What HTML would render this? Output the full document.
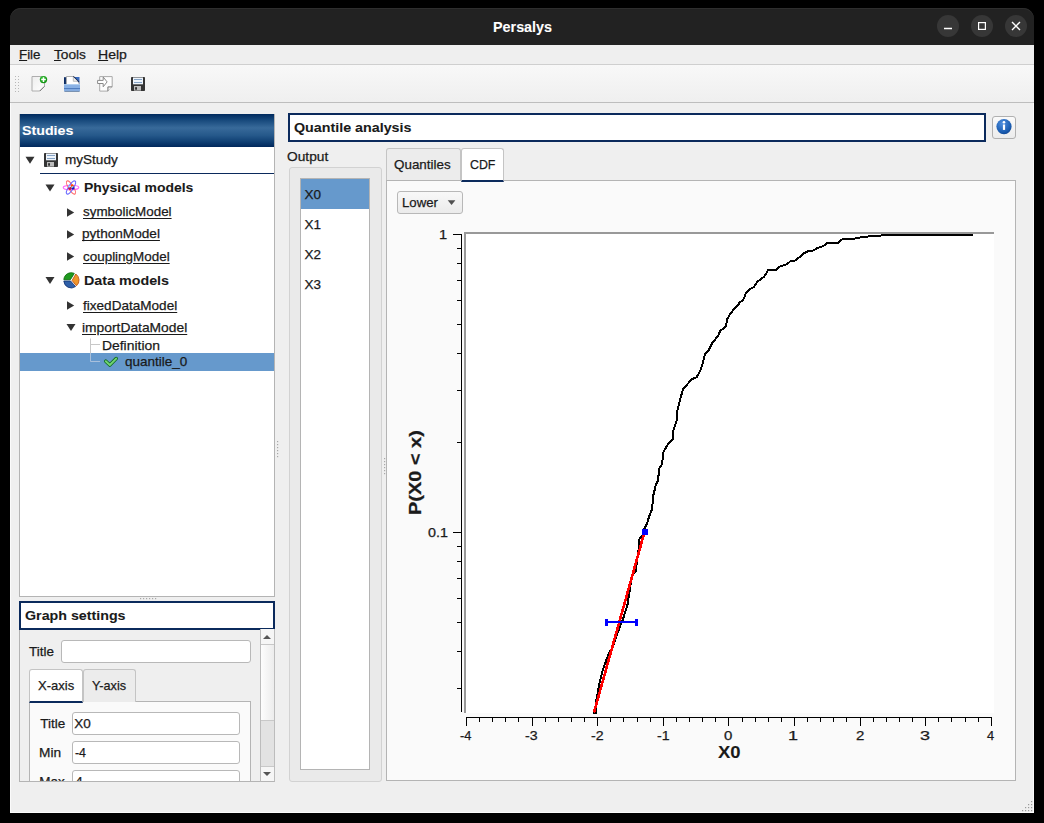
<!DOCTYPE html>
<html><head><meta charset="utf-8">
<style>
*{box-sizing:border-box}
html,body{margin:0;padding:0}
body{width:1044px;height:823px;overflow:hidden;background:#000;position:relative;font-family:"Liberation Sans",sans-serif;font-size:13px;color:#1a1a1a}
.a{position:absolute}
.t{position:absolute;white-space:nowrap;line-height:1;-webkit-text-stroke:0.25px currentColor}
svg.a{overflow:visible}
</style></head><body>
<div class="a" style="left:10px;top:40px;width:1024px;height:773px;background:#efefef"></div>
<div class="a" style="left:10px;top:45px;width:1024px;height:768px;border:1px solid #fbfbfb;border-top:0"></div>
<div class="a" style="left:10px;top:8px;width:1024px;height:37px;background:#222;border-radius:11px 11px 0 0;box-shadow:inset 0 1px 0 #2e2e2e"></div>
<div class="t" id="t0" style="left:492.58px;top:20.25px;font-size:14px;font-weight:bold;-webkit-text-stroke:0.08px currentColor;color:#fff;transform:scaleX(1.0250);transform-origin:0 0">Persalys</div>
<div class="a" style="left:937px;top:15px;width:22px;height:22px;border-radius:50%;background:#373737"></div>
<div class="a" style="left:971px;top:15px;width:22px;height:22px;border-radius:50%;background:#373737"></div>
<div class="a" style="left:1005px;top:15px;width:22px;height:22px;border-radius:50%;background:#373737"></div>
<svg class="a" style="left:0;top:0" width="1044" height="823">
<path d="M944 28.5H952" stroke="#fff" stroke-width="1.5"/>
<rect x="978.6" y="22.6" width="6.8" height="6.8" stroke="#fff" stroke-width="1.2" fill="none"/>
<path d="M1012 22L1020 30M1020 22L1012 30" stroke="#fff" stroke-width="1.4"/>
</svg>
<div class="a" style="left:10px;top:45px;width:1024px;height:20px;background:#efefef;border-bottom:1px solid #cfcfcf"></div>
<div class="t" id="t1" style="left:18.98px;top:48.40px;font-size:13px;transform:scaleX(1.0250);transform-origin:0 0"><u>F</u>ile</div>
<div class="t" id="t2" style="left:53.80px;top:48.40px;font-size:13px;transform:scaleX(1.0533);transform-origin:0 0"><u>T</u>ools</div>
<div class="t" id="t3" style="left:97.92px;top:48.40px;font-size:13px;transform:scaleX(1.0800);transform-origin:0 0"><u>H</u>elp</div>
<div class="a" style="left:10px;top:65px;width:1024px;height:38px;background:linear-gradient(#f8f8f8,#efefef);border-bottom:1px solid #bdbdbd"></div>
<div class="a" style="left:19px;top:114px;width:256px;height:483px;background:#fff;border:1px solid #b4b4b4;border-top:0"></div>
<div class="a" style="left:20px;top:114px;width:254px;height:33px;background:linear-gradient(#002a5e 0%,#16487b 18%,#386a9a 42%,#25588a 65%,#0e3e72 85%,#00275b 100%)"></div>
<div class="t" id="t4" style="left:22.45px;top:123.67px;font-size:13.5px;font-weight:bold;-webkit-text-stroke:0.08px currentColor;color:#fff;transform:scaleX(1.0532);transform-origin:0 0">Studies</div>
<svg class="a" style="left:0;top:0" width="1044" height="823">
<path d="M25.5 156.8H34.5L30 163.8Z" fill="#333"/>
<path d="M45.5 184.5H54.5L50 191.5Z" fill="#333"/>
<path d="M45.5 277H54.5L50 284Z" fill="#333"/>
<path d="M67 208.3V216.7L74.2 212.5Z" fill="#333"/>
<path d="M67 230.3V238.7L74.2 234.5Z" fill="#333"/>
<path d="M67 252.3V260.7L74.2 256.5Z" fill="#333"/>
<path d="M67 301.3V309.7L74.2 305.5Z" fill="#333"/>
<path d="M66.5 324H75.5L71 331Z" fill="#333"/>
<path d="M40 173.5H274" stroke="#0b2a5c" stroke-width="1"/>
<path d="M90.5 338.5V353M90.5 344.5H100" stroke="#c8c8c8" stroke-width="1" fill="none"/>
</svg>
<div class="a" style="left:20px;top:353px;width:254px;height:18px;background:#6699cc"></div>
<svg class="a" style="left:0;top:0" width="1044" height="823">
<path d="M90.5 353V361.5H100" stroke="#a8c0dc" stroke-width="1" fill="none"/>
</svg>
<div class="t" id="t5" style="left:64.60px;top:153.47px;font-size:13.5px;transform:scaleX(1.0038);transform-origin:0 0">myStudy</div>
<div class="t" id="t6" style="left:84.47px;top:181.17px;font-size:13.5px;font-weight:bold;-webkit-text-stroke:0.08px currentColor;transform:scaleX(1.0337);transform-origin:0 0">Physical models</div>
<div class="t" id="t7" style="left:83.40px;top:205.37px;font-size:13.5px;text-decoration:underline;text-underline-offset:2px;transform:scaleX(0.9921);transform-origin:0 0">symbolicModel</div>
<div class="t" id="t8" style="left:82.39px;top:227.37px;font-size:13.5px;text-decoration:underline;text-underline-offset:2px;transform:scaleX(1.0079);transform-origin:0 0">pythonModel</div>
<div class="t" id="t9" style="left:83.40px;top:249.67px;font-size:13.5px;text-decoration:underline;text-underline-offset:2px;transform:scaleX(0.9953);transform-origin:0 0">couplingModel</div>
<div class="t" id="t10" style="left:84.24px;top:273.97px;font-size:13.5px;font-weight:bold;-webkit-text-stroke:0.08px currentColor;transform:scaleX(1.0595);transform-origin:0 0">Data models</div>
<div class="t" id="t11" style="left:83.00px;top:299.27px;font-size:13.5px;text-decoration:underline;text-underline-offset:2px;transform:scaleX(1.0043);transform-origin:0 0">fixedDataModel</div>
<div class="t" id="t12" style="left:81.98px;top:321.17px;font-size:13.5px;text-decoration:underline;text-underline-offset:2px;transform:scaleX(1.0238);transform-origin:0 0">importDataModel</div>
<div class="t" id="t13" style="left:102.37px;top:338.67px;font-size:13.5px;transform:scaleX(1.0291);transform-origin:0 0">Definition</div>
<div class="t" id="t14" style="left:125.00px;top:354.97px;font-size:13.5px;transform:scaleX(1.0000);transform-origin:0 0">quantile_0</div>
<div class="a" style="left:19px;top:601px;width:256px;height:29px;background:#fff;border:2px solid #0b2a5c"></div>
<div class="t" id="t15" style="left:25.44px;top:608.97px;font-size:13.5px;font-weight:bold;-webkit-text-stroke:0.08px currentColor;transform:scaleX(1.0553);transform-origin:0 0">Graph settings</div>
<div class="a" style="left:19px;top:630px;width:256px;height:152px;border:1px solid #b4b4b4;border-top:0"></div>
<div class="a" style="left:20px;top:630px;width:240px;height:151px;overflow:hidden">
<div class="t" id="t16" style="left:9.30px;top:14.77px;font-size:13.5px;transform:scaleX(0.9960);transform-origin:0 0">Title</div>
<div class="a" style="left:41px;top:10px;width:190px;height:23px;border:1px solid #b8b8b8;border-radius:3px;background:#fff"></div>
<div class="a" style="left:9px;top:71px;width:222px;height:90px;border:1px solid #b4b4b4;background:#fafafa"></div>
<div class="a" style="left:63px;top:39px;width:53px;height:33px;border:1px solid #c4c4c4;border-bottom:0;border-radius:3px 3px 0 0;background:#ececec"></div>
<div class="a" style="left:9px;top:39px;width:54px;height:34px;border:1px solid #c4c4c4;border-bottom:2px solid #0b2a5c;border-radius:3px 3px 0 0;background:#fff"></div>
<div class="t" id="t17" style="left:17.54px;top:48.97px;font-size:13.5px;transform:scaleX(0.9639);transform-origin:0 0">X-axis</div>
<div class="t" id="t18" style="left:72.20px;top:49.47px;font-size:13.5px;transform:scaleX(0.9389);transform-origin:0 0">Y-axis</div>
<div class="t" id="t19" style="left:20.30px;top:86.77px;font-size:13.5px;transform:scaleX(1.0000);transform-origin:0 0">Title</div>
<div class="a" style="left:52px;top:82px;width:168px;height:23px;border:1px solid #b8b8b8;border-radius:3px;background:#fff"></div>
<div class="t" id="t20" style="left:54.30px;top:86.77px;font-size:13.5px;transform:scaleX(1.0000);transform-origin:0 0">X0</div>
<div class="t" id="t21" style="left:19.28px;top:115.77px;font-size:13.5px;transform:scaleX(1.0150);transform-origin:0 0">Min</div>
<div class="a" style="left:52px;top:111px;width:168px;height:23px;border:1px solid #b8b8b8;border-radius:3px;background:#fff"></div>
<div class="t" id="t22" style="left:55.30px;top:115.77px;font-size:13.5px;transform:scaleX(0.9167);transform-origin:0 0">-4</div>
<div class="t" id="t23" style="left:19.30px;top:144.77px;font-size:13.5px;transform:scaleX(1.0000);transform-origin:0 0">Max</div>
<div class="a" style="left:52px;top:140px;width:168px;height:23px;border:1px solid #b8b8b8;border-radius:3px;background:#fff"></div>
<div class="t" id="t24" style="left:55.30px;top:144.77px;font-size:13.5px;transform:scaleX(1.0000);transform-origin:0 0">4</div>
</div>
<div class="a" style="left:260px;top:629px;width:15px;height:153px;border-left:1px solid #bcbcbc;border-right:1px solid #bcbcbc;border-bottom:1px solid #b4b4b4;background:linear-gradient(90deg,#fdfdfd,#ececec)"></div>
<div class="a" style="left:261px;top:644px;width:13px;height:1px;background:#c8c8c8"></div>
<div class="a" style="left:261px;top:629px;width:13px;height:15px;background:#f6f6f6"></div>
<div class="a" style="left:261px;top:720px;width:13px;height:47px;background:#e2e2e2;border-top:1px solid #c8c8c8;border-bottom:1px solid #c8c8c8"></div>
<div class="a" style="left:261px;top:767px;width:13px;height:14px;background:#f6f6f6"></div>
<svg class="a" style="left:0;top:0" width="1044" height="823"><path d="M263 639H271L267 635Z" fill="#555"/><path d="M263 772H271L267 776Z" fill="#555"/></svg>
<div class="a" style="left:288px;top:113px;width:698px;height:29px;background:#fff;border:2px solid #0b2a5c"></div>
<div class="t" id="t25" style="left:294.34px;top:121.07px;font-size:13.5px;font-weight:bold;-webkit-text-stroke:0.08px currentColor;transform:scaleX(1.0578);transform-origin:0 0">Quantile analysis</div>
<div class="a" style="left:992px;top:116px;width:24px;height:23px;border:1px solid #b0b0b0;border-radius:3px;background:linear-gradient(#fafafa,#ececec)"></div>
<div class="t" id="t26" style="left:287.28px;top:149.97px;font-size:13.5px;transform:scaleX(1.0175);transform-origin:0 0">Output</div>
<div class="a" style="left:289px;top:167px;width:93px;height:615px;border:1px solid #d2d2d2;border-radius:3px;background:#eaeaea"></div>
<div class="a" style="left:300px;top:178px;width:70px;height:592px;border:1px solid #b4b4b4;background:#fff"></div>
<div class="a" style="left:301px;top:179px;width:68px;height:30px;background:#6699cc"></div>
<div class="t" id="t27" style="left:304.50px;top:188.17px;font-size:13.5px">X0</div>
<div class="t" id="t28" style="left:304.50px;top:217.97px;font-size:13.5px">X1</div>
<div class="t" id="t29" style="left:304.50px;top:247.77px;font-size:13.5px">X2</div>
<div class="t" id="t30" style="left:304.50px;top:277.57px;font-size:13.5px">X3</div>
<div class="a" style="left:386px;top:180px;width:630px;height:601px;border:1px solid #b4b4b4;background:#fafafa"></div>
<div class="a" style="left:386px;top:148px;width:75px;height:32px;border:1px solid #c4c4c4;border-bottom:0;border-radius:3px 3px 0 0;background:#ececec"></div>
<div class="t" id="t31" style="left:394.41px;top:158.47px;font-size:13.5px;transform:scaleX(0.9929);transform-origin:0 0">Quantiles</div>
<div class="a" style="left:461px;top:148px;width:43px;height:34px;border:1px solid #c4c4c4;border-bottom:2px solid #0b2a5c;border-radius:3px 3px 0 0;background:#fff"></div>
<div class="t" id="t32" style="left:469.58px;top:157.77px;font-size:13.5px;transform:scaleX(0.9154);transform-origin:0 0">CDF</div>
<div class="a" style="left:397px;top:191px;width:66px;height:23px;border:1px solid #b8b8b8;border-radius:3px;background:linear-gradient(#f8f8f8,#ebebeb)"></div>
<div class="t" id="t33" style="left:401.52px;top:195.77px;font-size:13.5px;transform:scaleX(0.9778);transform-origin:0 0">Lower</div>
<svg class="a" style="left:0;top:0" width="1044" height="823">
<rect x="15" y="76" width="1" height="1" fill="#b8b8b8"/><rect x="15" y="79" width="1" height="1" fill="#b8b8b8"/><rect x="15" y="82" width="1" height="1" fill="#b8b8b8"/><rect x="15" y="85" width="1" height="1" fill="#b8b8b8"/><rect x="15" y="88" width="1" height="1" fill="#b8b8b8"/><rect x="15" y="91" width="1" height="1" fill="#b8b8b8"/><rect x="18" y="76" width="1" height="1" fill="#b8b8b8"/><rect x="18" y="79" width="1" height="1" fill="#b8b8b8"/><rect x="18" y="82" width="1" height="1" fill="#b8b8b8"/><rect x="18" y="85" width="1" height="1" fill="#b8b8b8"/><rect x="18" y="88" width="1" height="1" fill="#b8b8b8"/><rect x="18" y="91" width="1" height="1" fill="#b8b8b8"/>
<defs>
<linearGradient id="pg" x1="0" y1="0" x2="1" y2="1"><stop offset="0" stop-color="#ededed"/><stop offset="1" stop-color="#ffffff"/></linearGradient>
<radialGradient id="gr" cx="0.4" cy="0.35" r="0.7"><stop offset="0" stop-color="#3cc83c"/><stop offset="1" stop-color="#0a8a0a"/></radialGradient>
<radialGradient id="ib" cx="0.4" cy="0.3" r="0.8"><stop offset="0" stop-color="#4f8fdf"/><stop offset="0.7" stop-color="#1a5cb0"/><stop offset="1" stop-color="#0c3f8a"/></radialGradient>
</defs>
<path d="M32 76.5H44.5V86.3L39.8 91H32Z" fill="url(#pg)" stroke="#adadad" stroke-width="1"/>
<path d="M44.5 86.3L39.8 91" stroke="#777" stroke-width="1"/>
<circle cx="43.5" cy="79.6" r="3.7" fill="url(#gr)"/>
<path d="M41.2 79.6H45.8M43.5 77.3V81.9" stroke="#fff" stroke-width="1.5"/>

<path d="M64 77.2H69.5V85H64Z" fill="#0c2c64"/>
<path d="M72.5 77H79.5V85H72.5Z" fill="#3a6cc0"/>
<path d="M66.4 85V76.5H73.3L79 82.2V85Z" fill="#fff" stroke="#a6a6a6" stroke-width="0.9"/>
<path d="M73.3 76.5L79 82.2" stroke="#1a2d55" stroke-width="1.1"/>
<path d="M73.3 77V81.3H77.6" fill="#ececec" stroke="#b0b0b0" stroke-width="0.8"/>
<path d="M64 84.3H80V90.7Q80 91.8 78.8 91.8H65.2Q64 91.8 64 90.7Z" fill="#88b0e4"/>
<path d="M64 84.6H80" stroke="#b8d4f4" stroke-width="0.8"/>
<path d="M64 88.6H80" stroke="#4a78bb" stroke-width="1"/>
<path d="M64.5 91.4H79.5" stroke="#6a7f9a" stroke-width="0.8"/>

<path d="M99.7 76.6H112.2V86.4L107.9 91.1H99.7Z" fill="#fdfdfd" stroke="#a9a9a9" stroke-width="1"/>
<path d="M107.9 91.1V86.9H112.2" fill="#f2f2f2" stroke="#777" stroke-width="1"/>
<path d="M97.6 80.4H103.2V77L107.1 81.9L103.2 86.8V83.5H97.6Z" fill="#fff" stroke="#8a8a8a" stroke-width="1" stroke-linejoin="round"/>

<g transform="translate(0 0)">
<rect x="131" y="77" width="14" height="14" rx="0.8" fill="#343434"/>
<rect x="133" y="77.5" width="10" height="6.8" fill="#eef4fb"/>
<path d="M134 79.5H142M134 82.5H142" stroke="#86a4c6" stroke-width="1"/>
<rect x="134" y="86" width="7" height="4.6" fill="#bdbdbd"/>
<rect x="135.2" y="87.2" width="1.7" height="2.5" fill="#222"/>
</g>
<g transform="translate(-87 76)">
<rect x="131" y="77" width="14" height="14" rx="0.8" fill="#343434"/>
<rect x="133" y="77.5" width="10" height="6.8" fill="#eef4fb"/>
<path d="M134 79.5H142M134 82.5H142" stroke="#86a4c6" stroke-width="1"/>
<rect x="134" y="86" width="7" height="4.6" fill="#bdbdbd"/>
<rect x="135.2" y="87.2" width="1.7" height="2.5" fill="#222"/>
</g>
<g transform="translate(71 187.5)" fill="none" stroke-width="1.1">
<ellipse rx="7.8" ry="2.3" stroke="#ff66ff"/>
<ellipse rx="7.6" ry="2.4" transform="rotate(58)" stroke="#ff6a6a"/>
<ellipse rx="7.6" ry="2.4" transform="rotate(-58)" stroke="#6a6aff"/>
<circle cx="-1" cy="0.8" r="1.6" fill="#c0104a" stroke="none"/>
<circle cx="1.2" cy="-1.8" r="1.5" fill="#ff4a00" stroke="none"/>
<circle cx="2" cy="0.6" r="1.5" fill="#1010c0" stroke="none"/>
<circle cx="-1.6" cy="-1" r="0.9" fill="#a0f0ff" stroke="none"/>
<circle cx="1.5" cy="-0.6" r="0.9" fill="#80e0f0" stroke="none"/>
</g>
<g transform="translate(71.2 280.3)">
<path d="M-7.4 -0.6A7.4 7.4 0 0 1 3.1 -6.9L-0.8 -0.6Z" fill="#1f9a1f" stroke="#0b6a0b" stroke-width="0.8"/>
<path d="M0.9 0.2L4.6 -6.3A7.4 7.4 0 0 1 5.2 5.5Z" fill="#f0962a" stroke="#b8480a" stroke-width="0.8"/>
<path d="M-7.4 0.7H-0.6L4.3 6.3A7.4 7.4 0 0 1 -7.4 0.7Z" fill="#2f5fa8" stroke="#0e2f70" stroke-width="0.8"/>
</g>
<path d="M105.8 361.2L109.8 365L116.2 358.6" fill="none" stroke="#0e6a1e" stroke-width="3.6" stroke-linejoin="round" stroke-linecap="round"/>
<path d="M105.8 361.2L109.8 365L116.2 358.6" fill="none" stroke="#72d472" stroke-width="2"  stroke-linejoin="round" stroke-linecap="round"/>
<circle cx="1004" cy="126.6" r="7.6" fill="url(#ib)"/>
<circle cx="1004" cy="122.2" r="1.3" fill="#fff"/>
<rect x="1002.9" y="124.5" width="2.2" height="5.4" fill="#fff"/>
<path d="M447.7 200.3H455.4L451.55 205Z" fill="#505050"/>
<rect x="277" y="441" width="1.2" height="1.2" fill="#a8a8a8"/><rect x="277" y="444" width="1.2" height="1.2" fill="#a8a8a8"/><rect x="277" y="447" width="1.2" height="1.2" fill="#a8a8a8"/><rect x="277" y="450" width="1.2" height="1.2" fill="#a8a8a8"/><rect x="277" y="453" width="1.2" height="1.2" fill="#a8a8a8"/><rect x="277" y="456" width="1.2" height="1.2" fill="#a8a8a8"/>
<rect x="384" y="458" width="1.2" height="1.2" fill="#a8a8a8"/><rect x="384" y="461" width="1.2" height="1.2" fill="#a8a8a8"/><rect x="384" y="464" width="1.2" height="1.2" fill="#a8a8a8"/><rect x="384" y="467" width="1.2" height="1.2" fill="#a8a8a8"/><rect x="384" y="470" width="1.2" height="1.2" fill="#a8a8a8"/><rect x="384" y="473" width="1.2" height="1.2" fill="#a8a8a8"/>
<rect x="140" y="598" width="1.2" height="1.2" fill="#a8a8a8"/><rect x="143" y="598" width="1.2" height="1.2" fill="#a8a8a8"/><rect x="146" y="598" width="1.2" height="1.2" fill="#a8a8a8"/><rect x="149" y="598" width="1.2" height="1.2" fill="#a8a8a8"/><rect x="152" y="598" width="1.2" height="1.2" fill="#a8a8a8"/><rect x="155" y="598" width="1.2" height="1.2" fill="#a8a8a8"/>
</svg>
<svg class="a" style="left:0;top:0" width="1044" height="823"><rect x="1031" y="801" width="1.2" height="1.2" fill="#9a9a9a"/><rect x="1031" y="804" width="1.2" height="1.2" fill="#9a9a9a"/><rect x="1028" y="804" width="1.2" height="1.2" fill="#9a9a9a"/><rect x="1031" y="807" width="1.2" height="1.2" fill="#9a9a9a"/><rect x="1028" y="807" width="1.2" height="1.2" fill="#9a9a9a"/><rect x="1025" y="807" width="1.2" height="1.2" fill="#9a9a9a"/><rect x="1031" y="810" width="1.2" height="1.2" fill="#9a9a9a"/><rect x="1028" y="810" width="1.2" height="1.2" fill="#9a9a9a"/><rect x="1025" y="810" width="1.2" height="1.2" fill="#9a9a9a"/><rect x="1022" y="810" width="1.2" height="1.2" fill="#9a9a9a"/></svg>
<div class="a" style="left:464px;top:232px;width:530px;height:481px;background:#fff;border-top:2px solid #999;border-left:2px solid #999"></div>
<svg class="a" style="left:0;top:0" width="1044" height="823">
<path d="M461.5 234V712" stroke="#000" stroke-width="1"/>
<path d="M453 234.5H462M453 532.5H462M457 442.5H462M457 390.5H462M457 353.5H462M457 324.5H462M457 300.5H462M457 280.5H462M457 263.5H462M457 248.5H462M457 688.5H462M457 651.5H462M457 622.5H462M457 598.5H462M457 578.5H462M457 561.5H462M457 546.5H462" stroke="#000" stroke-width="1"/>
<path d="M466 717.5H992" stroke="#000" stroke-width="1"/>
<path d="M466.5 717V726M479.5 717V722M492.5 717V722M505.5 717V722M518.5 717V722M532.5 717V726M545.5 717V722M558.5 717V722M571.5 717V722M584.5 717V722M597.5 717V726M610.5 717V722M623.5 717V722M637.5 717V722M650.5 717V722M663.5 717V726M676.5 717V722M689.5 717V722M702.5 717V722M715.5 717V722M728.5 717V726M742.5 717V722M755.5 717V722M768.5 717V722M781.5 717V722M794.5 717V726M807.5 717V722M820.5 717V722M833.5 717V722M846.5 717V722M860.5 717V726M873.5 717V722M886.5 717V722M899.5 717V722M912.5 717V722M925.5 717V726M938.5 717V722M951.5 717V722M965.5 717V722M978.5 717V722M991.5 717V726" stroke="#000" stroke-width="1"/>
<path d="M593 712.5 L596 712.5 L596 702 L598 691 L600 681 L602.5 671 L606 661 L609.5 652 L612.6 648 L615 640 L618 632 L621.4 622 L622.8 620 L627.7 603.8 L629.5 591.7 L631.9 575.9 L636.2 571 L636.8 560.1 L638.6 549.2 L639.2 539.4 L642.2 535.8 L644.1 529.1 L647.1 523.6 L649.2 516.2 L652.1 508.9 L653.2 495.8 L655.7 485.6 L658.2 479.8 L659 468.8 L662.3 463.7 L663 452.8 L668.1 444 L673.2 439 L673.2 431 L676.9 420 L677 412.2 L679.9 400.6 L682.8 389.7 L687.2 384.5 L691.5 379.4 L696.6 377.3 L701 369.2 L703.2 361.2 L705.1 353.9 L709 349.6 L712.7 342.3 L717.8 336.4 L720 331.3 L725.8 326.2 L727.3 319 L729.4 315.3 L732.8 310.5 L738.2 305 L739.4 302.6 L743.1 300.2 L746.1 292.9 L749.8 289.3 L754 286.8 L757.7 281.4 L764.3 276.5 L768 270.4 L775.9 269.8 L779.5 266.8 L786.8 264.3 L791.1 260.7 L794.7 260.7 L800.2 256.5 L803.8 253.4 L808.7 251 L813.6 250.4 L817.2 248 L823.3 246.1 L826.9 243.1 L831.8 242.5 L838.5 242.5 L843 238.7 L853.6 238.7 L864.2 236.8 L878 235.8 L886.2 235 L905.7 235 L973.3 235" stroke="#000" stroke-width="2" fill="none" shape-rendering="crispEdges"/>
<path d="M594 712.5L644.5 532" stroke="#f00" stroke-width="2.6" fill="none" shape-rendering="crispEdges"/>
<rect x="642" y="529" width="6" height="6" fill="#00f"/>
<path d="M605 622H638" stroke="#00f" stroke-width="2"/>
<rect x="605" y="619" width="3" height="7" fill="#00f"/>
<rect x="635" y="619" width="3" height="7" fill="#00f"/>
</svg>
<div class="t" id="t34" style="left:439.48px;top:229.04px;font-size:12px;transform:scaleX(1.2200);transform-origin:0 0">1</div>
<div class="t" id="t35" style="left:427.70px;top:526.94px;font-size:12px;transform:scaleX(1.1938);transform-origin:0 0">0.1</div>
<div class="t" id="t36" style="left:459.80px;top:730.24px;font-size:12px;transform:scaleX(1.0727);transform-origin:0 0">-4</div>
<div class="t" id="t37" style="left:525.40px;top:730.24px;font-size:12px;transform:scaleX(1.1800);transform-origin:0 0">-3</div>
<div class="t" id="t38" style="left:591.00px;top:730.24px;font-size:12px;transform:scaleX(1.1800);transform-origin:0 0">-2</div>
<div class="t" id="t39" style="left:656.60px;top:730.24px;font-size:12px;transform:scaleX(1.1800);transform-origin:0 0">-1</div>
<div class="t" id="t40" style="left:724.35px;top:730.24px;font-size:12px;transform:scaleX(1.2500);transform-origin:0 0">0</div>
<div class="t" id="t41" style="left:788.45px;top:730.24px;font-size:12px;transform:scaleX(1.5000);transform-origin:0 0">1</div>
<div class="t" id="t42" style="left:855.55px;top:730.24px;font-size:12px;transform:scaleX(1.2500);transform-origin:0 0">2</div>
<div class="t" id="t43" style="left:919.65px;top:730.24px;font-size:12px;transform:scaleX(1.5000);transform-origin:0 0">3</div>
<div class="t" id="t44" style="left:986.75px;top:730.24px;font-size:12px;transform:scaleX(1.0714);transform-origin:0 0">4</div>
<div class="t" id="t45" style="left:717.50px;top:745.16px;font-size:16px;font-weight:bold;-webkit-text-stroke:0.08px currentColor;transform:scaleX(1.1526);transform-origin:0 0">X0</div>
<div class="t" id="trot" style="left:407.66px;top:515px;font-size:16px;font-weight:bold;transform:rotate(-90deg) scaleX(1.2470);transform-origin:0 0">P(X0 &lt; x)</div>
</body></html>
